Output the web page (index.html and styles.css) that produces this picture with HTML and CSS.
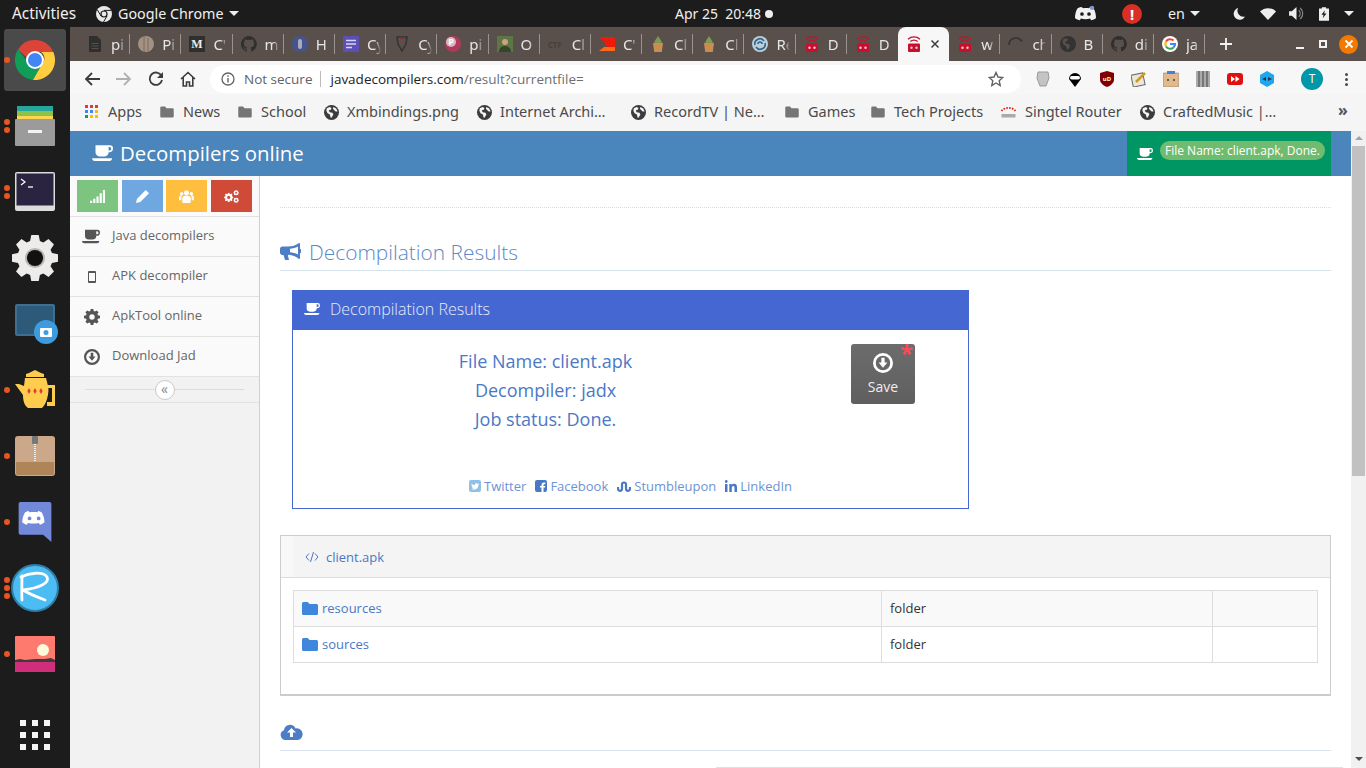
FILE: index.html
```html
<!DOCTYPE html>
<html lang="en">
<head>
<meta charset="utf-8">
<title>Decompilers online</title>
<link rel="stylesheet" href="styles.css">
</head>
<body>
<svg class="defs" width="0" height="0" aria-hidden="true">
  <symbol id="coffee" viewBox="0 0 24 20"><path fill-rule="evenodd" d="M4 1h16.500a3.500 3.500 0 0 1 3.500 3.500a4.500 4.500 0 0 1-4.500 4.500H19a5 5 0 0 1-5 5H9a5 5 0 0 1-5-5zM19 3v4h1a2 2 0 0 0 0-4z"/><path d="M0 16h23c0 1.800-1.500 3-3 3H3c-1.500 0-3-1.200-3-3z"/></symbol>
  <symbol id="globe" viewBox="0 0 16 16"><circle cx="8" cy="8" r="8" fill="#3c3c3c"/><path fill="#f5f5f5" d="M3 3.500l3-1.300 2 1-1 2-2 .5 1 2 3 .5 1 2-2 3.300-1-.3-.7-3-2.500-1.500L2.500 6zM10 2l3 1.800 1.500 3-2 .2-1.500-1.500L9.500 4z"/></symbol>
  <symbol id="folder" viewBox="0 0 16 14"><path d="M0 2a1.500 1.500 0 0 1 1.500-1.500h4.200L7.500 2.500h7A1.500 1.500 0 0 1 16 4v8a1.500 1.500 0 0 1-1.500 1.500h-13A1.500 1.500 0 0 1 0 12z"/></symbol>
  <symbol id="github" viewBox="0 0 16 16"><path fill-rule="evenodd" d="M8 0a8 8 0 0 0-2.500 15.600c.4.100.5-.2.500-.4v-1.400c-2.200.5-2.700-1-2.700-1-.4-.9-.9-1.200-.9-1.200-.7-.5.100-.5.100-.5.800.1 1.200.8 1.200.8.700 1.200 1.900.9 2.300.7.100-.5.300-.9.500-1.100-1.800-.2-3.600-.9-3.600-4 0-.9.300-1.600.8-2.100-.1-.2-.4-1 .1-2.100 0 0 .7-.2 2.200.8a7.600 7.600 0 0 1 4 0c1.500-1 2.200-.8 2.200-.8.400 1.100.2 1.900.1 2.100.5.600.8 1.300.8 2.100 0 3.100-1.900 3.700-3.700 3.900.3.300.6.800.6 1.500v2.200c0 .2.100.5.600.4A8 8 0 0 0 8 0z"/></symbol>
  <symbol id="redbot" viewBox="0 0 16 16"><path fill="none" stroke="#c8102e" stroke-width="1.400" d="M2 3.200a9 9 0 0 1 12 0M4.300 5.600a5.500 5.500 0 0 1 7.400 0"/><rect x="2" y="7.500" width="12" height="8.500" rx="1" fill="#c8102e"/><circle cx="5.500" cy="11.700" r="1.200" fill="#f4c9c9"/><circle cx="10.500" cy="11.700" r="1.200" fill="#f4c9c9"/></symbol>
  <symbol id="pot" viewBox="0 0 16 16"><path fill="#7c9a55" d="M8 0l3.500 5.500V7h-7V5.500z"/><path fill="#c98e4f" d="M3 7h10l-1.200 9H4.200z"/></symbol>
  <symbol id="gear" viewBox="0 0 16 16"><path fill-rule="evenodd" d="M6.700 0h2.600l.4 2.100 1.200.5 1.800-1.200 1.900 1.900-1.200 1.800.5 1.200 2.100.4v2.600l-2.100.4-.5 1.200 1.200 1.800-1.900 1.900-1.800-1.200-1.200.5-.4 2.100H6.700l-.4-2.100-1.200-.5-1.800 1.200-1.900-1.900 1.200-1.800-.5-1.200L0 9.300V6.700l2.100-.4.500-1.200-1.200-1.800 1.900-1.900 1.800 1.200 1.200-.5zM8 5.300a2.700 2.700 0 1 0 0 5.400 2.700 2.700 0 0 0 0-5.400z"/></symbol>
  <symbol id="download" viewBox="0 0 16 16"><path fill-rule="evenodd" d="M8 0a8 8 0 1 1 0 16A8 8 0 0 1 8 0zm0 2.200a5.800 5.800 0 1 0 0 11.600A5.800 5.800 0 0 0 8 2.200z"/><path d="M6.700 3.800h2.600v3.700h2.200L8 11.800 4.500 7.500h2.200z"/></symbol>
  <symbol id="tab-doc" viewBox="0 0 16 16"><path fill="#2f2f2f" d="M2 0h8l4 4v12H2z"/><path stroke="#5a504b" d="M4.500 7.500h7M4.500 10h7M4.500 12.500h7"/></symbol>
</svg>

<header class="topbar">
  <span class="activities">Activities</span>
  <span class="appmenu">
    <svg class="ic-16" viewBox="0 0 16 16"><circle cx="8" cy="8" r="8" fill="#e9e9e9"/><circle cx="8" cy="8" r="3.600" fill="#1c1c1c"/><circle cx="8" cy="8" r="2.400" fill="#e9e9e9"/><path d="M8 4.400h7M5 10L1.500 4M11 10l-3.500 6" stroke="#1c1c1c" stroke-width="1"/></svg>
    <span>Google Chrome</span><i class="caret"></i>
  </span>
  <span class="clock">Apr 25&nbsp; 20:48<i class="clock-dot"></i></span>
  <span class="tray">
    <svg class="tray-discord" viewBox="0 0 24 18"><path fill="#f2f2f2" fill-rule="evenodd" d="M7 1.500C5 2 3.500 2.700 3 3 1 6 0 10 0 14c1.500 1.500 4 2.500 5.500 2.700l1.300-2c3 1 7.400 1 10.400 0l1.300 2c1.500-.2 4-1.200 5.500-2.700 0-4-1-8-3-11-.5-.3-2-1-4-1.500l-.8 1.500c-2-.3-4.400-.3-6.400 0zM8 7.500a2 2 0 1 1 0 4.200 2 2 0 0 1 0-4.200zm8 0a2 2 0 1 1 0 4.200 2 2 0 0 1 0-4.200z"/><circle cx="19.500" cy="2.500" r="2.500" fill="#7b9bd8"/></svg>
    <span class="alert">!</span>
    <span class="lang">en</span><i class="caret"></i>
    <svg class="tray-moon" viewBox="0 0 14 14"><path fill="#eee" d="M6 0a7 7 0 1 0 8 10A7 7 0 0 1 6 0z"/></svg>
    <svg class="tray-wifi" viewBox="0 0 16 12"><path fill="#eee" d="M8 12L0 3.500C4.500-1 11.500-1 16 3.500z"/></svg>
    <svg class="tray-vol" viewBox="0 0 16 14"><path fill="#eee" d="M0 4.500h3L8 0v14L3 9.500H0z"/><path fill="none" stroke="#888" stroke-width="1.300" d="M10.500 3.500a5 5 0 0 1 0 7M12 1a8 8 0 0 1 0 12"/></svg>
    <svg class="tray-batt" viewBox="0 0 12 16"><path fill="#eee" d="M3.500 0h5v1.500H12V16H0V1.500h3.500z"/><path fill="#1c1c1c" d="M7 3.500L3 9h2.500L4.500 13 9 7.500H6.300z"/></svg>
    <i class="caret caret-end"></i>
  </span>
</header>

<div class="desk">
  <nav class="dock">
    <div class="dock-slot dock-active"><i class="run run-1"></i>
      <svg class="dock-ic-40" viewBox="0 0 40 40"><path fill="#db4437" d="M3 9.500A20 20 0 0 1 38.300 12H20a8 8 0 0 0-7.800 6z"/><path fill="#0f9d58" d="M3 9.500A20 20 0 0 0 18 40l7.500-13a8 8 0 0 1-12.600-5z"/><path fill="#ffcd40" d="M38.300 12A20 20 0 0 1 18 40l8.800-15.500A8 8 0 0 0 26 12z"/><circle cx="20" cy="20" r="9" fill="#fff"/><circle cx="20" cy="20" r="7" fill="#4285f4"/></svg>
    </div>
    <div class="dock-slot"><i class="run run-2"></i>
      <svg class="dock-ic-40" viewBox="0 0 40 40"><rect x="2" y="0" width="36" height="6" fill="#26a69a"/><rect x="2" y="5" width="36" height="6" fill="#8bc34a"/><rect x="2" y="10" width="36" height="6" fill="#ffd54f"/><rect y="13" width="40" height="27" rx="1" fill="#9b9b9b"/><rect x="13" y="24" width="14" height="3" fill="#f2f2f2"/></svg>
    </div>
    <div class="dock-slot"><i class="run run-2"></i>
      <svg class="dock-ic-40" viewBox="0 0 40 40"><rect width="40" height="39" rx="2" fill="#dcdcdc"/><rect x="1.500" y="1.500" width="37" height="32" fill="#2b2440"/><path d="M6 7l4 3-4 3" fill="none" stroke="#fff" stroke-width="1.200"/><path d="M13 15h5" stroke="#fff" stroke-width="1.300"/></svg>
    </div>
    <div class="dock-slot">
      <svg class="dock-ic-46" viewBox="0 0 16 16"><use href="#gear" fill="#eeeceb"/><circle cx="8" cy="8" r="3.500" fill="#b9b7b5"/><circle cx="8" cy="8" r="2.800" fill="#111"/></svg>
    </div>
    <div class="dock-slot">
      <svg class="dock-ic-46" viewBox="0 0 46 40"><rect x="3" y="0" width="40" height="32" rx="2" fill="#2d5a78"/><rect x="4" y="1" width="38" height="30" rx="2" fill="none" stroke="#3c6f91" stroke-width="2"/><circle cx="34" cy="28" r="12" fill="#3d9ce0"/><rect x="28" y="24" width="12" height="9" rx="1" fill="#fff"/><circle cx="34" cy="28.500" r="2.500" fill="#3d9ce0"/></svg>
    </div>
    <div class="dock-slot"><i class="run run-1"></i>
      <svg class="dock-ic-40" viewBox="0 0 40 40"><path fill="#ffcd4d" d="M20 0l6 3 3 1v3H11V4l3-1z"/><path fill="#ffcd4d" d="M10 8h21l2 8c.8 3 .6 8-1 13-1 4-3 7-5 9H13C9 35 8 30 8 25L0 14h4l5 2z"/><path fill="#ffcd4d" fill-rule="evenodd" d="M32 15h8v21h-8v-4h5V18h-5z"/><path fill="#e53935" d="M14 18l1.700 3-1.700 3-1.700-3zM20 18l1.700 3-1.700 3-1.700-3zM26 18l1.700 3-1.700 3-1.700-3z"/></svg>
    </div>
    <div class="dock-slot"><i class="run run-1"></i>
      <svg class="dock-ic-40" viewBox="0 0 40 40"><rect width="40" height="40" rx="3" fill="#cba88a"/><path fill="#b08459" d="M1 26h38v11a2 2 0 0 1-2 2H3a2 2 0 0 1-2-2z"/><rect x="17" y="0" width="6" height="8" rx="1" fill="#77777a"/><path d="M20 8v18" stroke="#eee" stroke-width="2" stroke-dasharray="1 1"/></svg>
    </div>
    <div class="dock-slot"><i class="run run-1"></i>
      <svg class="dock-ic-40" viewBox="0 0 40 44"><path fill="#7289da" d="M2 2a2 2 0 0 1 2-2h32a2 2 0 0 1 2 2v42l-9-8H4a2 2 0 0 1-2-2z"/><path fill="#fff" fill-rule="evenodd" d="M13 10c-2 .5-3 1-4 1.500-2 3-3 7-3 11 2 1.500 4 2 5 2.500l1.200-2c4 1 8 1 12 0l1.200 2c1-.5 3-1 5-2.500 0-4-1-8-3-11-1-.5-2-1-4-1.500l-.6 1.200c-3-.4-6-.4-9 0zM14 16a2 2 0 1 1 0 4.200 2 2 0 0 1 0-4.200zm10 0a2 2 0 1 1 0 4.200 2 2 0 0 1 0-4.200z"/></svg>
    </div>
    <div class="dock-slot"><i class="run run-3"></i>
      <svg class="dock-ic-48" viewBox="0 0 48 48"><circle cx="24" cy="24" r="23" fill="#4cbcf5" stroke="#2e7ea6" stroke-width="2"/><path fill="none" stroke="#fff" stroke-width="2.800" stroke-linecap="round" stroke-linejoin="round" d="M10 13c8-4 22-6 26 0 3 6-8 11-24 13 6 4 14 7 22 10M11 12c0 8-.5 16 0 24"/></svg>
    </div>
    <div class="dock-slot"><i class="run run-1"></i>
      <svg class="dock-ic-40 dock-photo" viewBox="0 0 40 36"><rect width="40" height="36" rx="1" fill="#ff7a6e"/><circle cx="28" cy="14" r="6" fill="#fff9dc"/><path fill="#3c3c3c" d="M0 24l5-1 5 1 10-1 10 0 6-1 4 2v3H0z"/><rect y="26" width="40" height="10" fill="#d02e7b"/></svg>
    </div>
    <div class="dock-grid">
      <i></i><i></i><i></i><i></i><i></i><i></i><i></i><i></i><i></i>
    </div>
  </nav>

  <div class="browser">
    <div class="tabstrip">
      <div class="tab"><svg class="fav" viewBox="0 0 16 16"><use href="#tab-doc"/></svg><span class="tab-label">pi</span></div>
      <div class="tab"><svg class="fav" viewBox="0 0 16 16"><circle cx="8" cy="8" r="8" fill="#a39183"/><path d="M6 0v16M10 2v13" stroke="#7d6a5c"/></svg><span class="tab-label">Pi</span></div>
      <div class="tab"><svg class="fav" viewBox="0 0 16 16"><rect width="16" height="16" fill="#2f2f2f"/><text x="8" y="12" class="fav-m">M</text></svg><span class="tab-label">C'</span></div>
      <div class="tab"><svg class="fav fav-dark" viewBox="0 0 16 16"><use href="#github"/></svg><span class="tab-label">m</span></div>
      <div class="tab"><svg class="fav" viewBox="0 0 16 16"><circle cx="8" cy="8" r="8" fill="#43548f"/><rect x="6" y="3" width="4" height="10" rx="2" fill="#aab"/></svg><span class="tab-label">H</span></div>
      <div class="tab"><svg class="fav" viewBox="0 0 16 16"><rect width="16" height="16" rx="1" fill="#5c4fb5"/><path d="M3 4.500h10M3 8h10M3 11.500h6" stroke="#d8d4f2" stroke-width="1.500"/></svg><span class="tab-label">Cy</span></div>
      <div class="tab"><svg class="fav" viewBox="0 0 16 16"><path fill="none" stroke="#333" stroke-width="1.500" d="M3 1h10l-1 7-4 7-4-7z"/><path d="M6 1h4v2H6z" fill="#8a2b2b"/></svg><span class="tab-label">Cy</span></div>
      <div class="tab"><svg class="fav" viewBox="0 0 16 16"><circle cx="8" cy="8" r="8" fill="#b03a5b"/><circle cx="6" cy="6" r="5" fill="#d8b7c4"/><text x="6" y="9" class="fav-p">P</text></svg><span class="tab-label">pi</span></div>
      <div class="tab"><svg class="fav" viewBox="0 0 16 16"><rect width="16" height="16" fill="#5e7645"/><circle cx="8" cy="6" r="3" fill="#caa27f"/><path d="M2 16c0-4 3-6 6-6s6 2 6 6z" fill="#33452b"/></svg><span class="tab-label">O</span></div>
      <div class="tab"><span class="fav fav-ctf">CTF</span><span class="tab-label">Cl</span></div>
      <div class="tab"><svg class="fav" viewBox="0 0 16 16"><path fill="#f01a0a" d="M0 1h16v10H8l-3-5z"/><path fill="#ff6a1a" d="M5 11h11v4H0z"/></svg><span class="tab-label">C'</span></div>
      <div class="tab"><svg class="fav" viewBox="0 0 16 16"><use href="#pot"/></svg><span class="tab-label">Cl</span></div>
      <div class="tab"><svg class="fav" viewBox="0 0 16 16"><use href="#pot"/></svg><span class="tab-label">Cl</span></div>
      <div class="tab"><svg class="fav" viewBox="0 0 16 16"><circle cx="8" cy="8" r="8" fill="#b9cfdc"/><path fill="none" stroke="#37668a" stroke-width="1.600" d="M3 9a5 5 0 0 1 9-4M13 7a5 5 0 0 1-9 4M6 8a2 2 0 0 1 4 0"/></svg><span class="tab-label">Re</span></div>
      <div class="tab"><svg class="fav" viewBox="0 0 16 16"><use href="#redbot"/></svg><span class="tab-label">D</span></div>
      <div class="tab tab-before-active"><svg class="fav" viewBox="0 0 16 16"><use href="#redbot"/></svg><span class="tab-label">D</span></div>
      <div class="tab tab-active"><svg class="fav" viewBox="0 0 16 16"><use href="#redbot"/></svg><svg class="tab-close" viewBox="0 0 10 10"><path d="M1.500 1.500l7 7M8.500 1.500l-7 7" stroke="#3c3c3c" stroke-width="1.500"/></svg></div>
      <div class="tab"><svg class="fav" viewBox="0 0 16 16"><use href="#redbot"/></svg><span class="tab-label">w</span></div>
      <div class="tab"><svg class="fav" viewBox="0 0 16 16"><path fill="none" stroke="#333" stroke-width="1.600" d="M1 9a7 7 0 0 1 13-3.500"/></svg><span class="tab-label">ch</span></div>
      <div class="tab"><svg class="fav" viewBox="0 0 16 16"><circle cx="8" cy="8" r="8" fill="#333"/><path fill="#5a504b" d="M3 3.500l3-1.300 2 1-1 2-2 .5 1 2 3 .5 1 2-2 3.300-1-.3-.7-3-2.500-1.500L2.500 6z"/></svg><span class="tab-label">B</span></div>
      <div class="tab"><svg class="fav fav-dark" viewBox="0 0 16 16"><use href="#github"/></svg><span class="tab-label">di</span></div>
      <div class="tab"><svg class="fav" viewBox="0 0 16 16"><circle cx="8" cy="8" r="8" fill="#fff"/><path fill="none" stroke-width="2.200" stroke="#ea4335" d="M11.500 4.500A5 5 0 0 0 4 5.500"/><path fill="none" stroke-width="2.200" stroke="#fbbc05" d="M4 5.500a5 5 0 0 0 0 5"/><path fill="none" stroke-width="2.200" stroke="#34a853" d="M4 10.500a5 5 0 0 0 7.500 1"/><path fill="none" stroke-width="2.200" stroke="#4285f4" d="M11.500 11.500A5 5 0 0 0 13 8H8"/></svg><span class="tab-label">ja</span></div>
      <svg class="newtab" viewBox="0 0 12 12"><path d="M6 0v12M0 6h12" stroke="#f2f2f2" stroke-width="1.800"/></svg>
      <div class="winbtns">
        <i class="win-min"></i><i class="win-max"></i>
        <span class="win-close"><svg viewBox="0 0 10 10"><path d="M1.500 1.500l7 7M8.500 1.500l-7 7" stroke="#fff" stroke-width="1.800"/></svg></span>
      </div>
    </div>

    <div class="toolbar">
      <svg class="tb-ic" viewBox="0 0 16 16"><path fill="none" stroke="#3c3c3c" stroke-width="1.800" d="M16 8H2M8 2L2 8l6 6"/></svg>
      <svg class="tb-ic" viewBox="0 0 16 16"><path fill="none" stroke="#b0b0b0" stroke-width="1.800" d="M0 8h14M8 2l6 6-6 6"/></svg>
      <svg class="tb-ic" viewBox="0 0 16 16"><path fill="none" stroke="#3c3c3c" stroke-width="1.800" d="M13.500 5A6.200 6.200 0 1 0 14 9"/><path fill="#3c3c3c" d="M15 1v6H9z"/></svg>
      <svg class="tb-ic" viewBox="0 0 16 16"><path fill="none" stroke="#3c3c3c" stroke-width="1.600" d="M1 8l7-6.500L15 8M3.200 6.500V15h3.300v-4h3v4h3.300V6.500"/></svg>
      <div class="omnibox">
        <svg class="omni-info" viewBox="0 0 14 14"><circle cx="7" cy="7" r="6" fill="none" stroke="#5f6368" stroke-width="1.300"/><path d="M7 6v4.500M7 3.300v1.500" stroke="#5f6368" stroke-width="1.400"/></svg>
        <span class="omni-warn">Not secure</span>
        <i class="omni-sep"></i>
        <span class="omni-url">javadecompilers.com<span class="omni-path">/result?currentfile=</span></span>
        <svg class="omni-star" viewBox="0 0 16 16"><path fill="none" stroke="#5f6368" stroke-width="1.400" d="M8 1.500l2 4.500 4.800.5-3.600 3.200 1 4.800L8 12l-4.200 2.500 1-4.800L1.200 6.500 6 6z"/></svg>
      </div>
      <div class="extensions">
        <svg class="ext" viewBox="0 0 16 16"><path fill="#c4c4c4" stroke="#999" d="M3 1h10l1 6-3 8H5L2 7z"/></svg>
        <svg class="ext" viewBox="0 0 16 16"><path d="M8 16L2 8a6 6 0 1 1 12 0z" fill="#000"/><rect x="3" y="5" width="10" height="3.500" rx="1.700" fill="#fff"/></svg>
        <svg class="ext" viewBox="0 0 16 16"><path fill="#800000" d="M1 2l7-2 7 2v7c0 3-4 6-7 7-3-1-7-4-7-7z"/><text x="8" y="10" class="ext-ub">uD</text></svg>
        <svg class="ext" viewBox="0 0 16 16"><rect x="1" y="3" width="12" height="12" fill="#eee6d6" stroke="#666" transform="rotate(-12 7 9)"/><path d="M5 11L14 2" stroke="#c99a2e" stroke-width="2.500"/></svg>
        <svg class="ext" viewBox="0 0 16 16"><rect y="2" width="16" height="14" rx="1" fill="#e2b98d" stroke="#7d6b56" stroke-width=".5"/><rect x="4" y="0" width="8" height="3" fill="#4a7fd6"/><circle cx="5" cy="9" r=".9" fill="#333"/><circle cx="11" cy="9" r=".9" fill="#333"/></svg>
        <svg class="ext" viewBox="0 0 16 16"><rect x="1" width="14" height="16" fill="#aaa"/><path d="M4 0v16M8 0v16M12 0v16" stroke="#777" stroke-width="2"/></svg>
        <svg class="ext" viewBox="0 0 16 16"><rect y="2" width="16" height="12" rx="3" fill="#e01010"/><path d="M4 5l4 3-4 3zM8.500 5l4 3-4 3z" fill="#fff"/></svg>
        <svg class="ext" viewBox="0 0 16 16"><path fill="#1ea7ee" d="M8 0l7 4v8l-7 4-7-4V4z"/><path fill="#334" d="M3 8l4-2v4zM13 8l-4-2v4z"/></svg>
      </div>
      <span class="avatar">T</span>
      <span class="kebab"><i></i><i></i><i></i></span>
    </div>

    <div class="bookmarks">
      <span class="bm bm-apps"><span class="apps-grid"><i class="a-r"></i><i class="a-r"></i><i class="a-r"></i><i class="a-b"></i><i class="a-b"></i><i class="a-y"></i><i class="a-g"></i><i class="a-y"></i><i class="a-y"></i></span>Apps</span>
      <span class="bm bm-news"><svg class="bm-folder" viewBox="0 0 16 14"><use href="#folder"/></svg>News</span>
      <span class="bm bm-school"><svg class="bm-folder" viewBox="0 0 16 14"><use href="#folder"/></svg>School</span>
      <span class="bm bm-xm"><svg class="bm-globe" viewBox="0 0 16 16"><use href="#globe"/></svg>Xmbindings.png</span>
      <span class="bm bm-ia"><svg class="bm-globe" viewBox="0 0 16 16"><use href="#globe"/></svg>Internet Archi…</span>
      <span class="bm bm-rec"><svg class="bm-globe" viewBox="0 0 16 16"><use href="#globe"/></svg>RecordTV | Ne…</span>
      <span class="bm bm-games"><svg class="bm-folder" viewBox="0 0 16 14"><use href="#folder"/></svg>Games</span>
      <span class="bm bm-tech"><svg class="bm-folder" viewBox="0 0 16 14"><use href="#folder"/></svg>Tech Projects</span>
      <span class="bm bm-sing"><svg class="bm-singtel" viewBox="0 0 16 16"><path fill="none" stroke="#e2231a" stroke-width="1.800" stroke-dasharray="1.600 1.200" d="M1 7a8 6 0 0 1 14 0"/><rect x="1" y="10" width="14" height="3.500" fill="#aaa"/></svg>Singtel Router</span>
      <span class="bm bm-craft"><svg class="bm-globe" viewBox="0 0 16 16"><use href="#globe"/></svg>CraftedMusic |…</span>
      <span class="bm-more">»</span>
    </div>

    <div class="viewport">
      <div class="page">
        <div class="site-header">
          <div class="brand"><svg class="brand-ic" viewBox="0 0 24 20"><use href="#coffee"/></svg>Decompilers online</div>
          <div class="notify"><svg class="notify-ic" viewBox="0 0 24 20"><use href="#coffee"/></svg><span class="pill">File Name: client.apk, Done.</span></div>
        </div>
        <div class="site-body">
          <aside class="sidebar">
            <div class="shortcuts">
              <span class="sc sc-green"><svg viewBox="0 0 14 12"><path fill="#fff" d="M0 10h2v2H0zM3 8h2v4H3zM6 6h2v6H6zM9 3h2v9H9zM12 0h2v12h-2z"/></svg></span>
              <span class="sc sc-blue"><svg viewBox="0 0 12 12"><path fill="#fff" d="M9 0l3 3-8 8-4 1 1-4z"/></svg></span>
              <span class="sc sc-yellow"><svg viewBox="0 0 16 14"><g fill="#fff"><circle cx="8" cy="3" r="2.700"/><path d="M3.500 14V9c0-2 2-3 4.500-3s4.500 1 4.500 3v5z"/><circle cx="2.800" cy="4" r="1.900"/><circle cx="13.200" cy="4" r="1.900"/><path d="M0 11V8c0-1.500 1-2.300 2.500-2.300.300 0 .500 0 .8.100C2.500 6.500 2.500 7.500 2.500 9v2zM16 11V8c0-1.500-1-2.300-2.500-2.300-.3 0-.5 0-.8.100.8.700.8 1.700.8 3.200v2z"/></g></svg></span>
              <span class="sc sc-red"><svg viewBox="0 0 16 14"><use href="#gear" x="0" y="3" width="10" height="10" fill="#fff"/><use href="#gear" x="10" y="0" width="6" height="6" fill="#fff"/><use href="#gear" x="10" y="8" width="6" height="6" fill="#fff"/></svg></span>
            </div>
            <ul class="menu">
              <li class="menu-item"><svg class="menu-ic" viewBox="0 0 24 20"><use href="#coffee"/></svg>Java decompilers</li>
              <li class="menu-item"><svg class="menu-ic menu-ic-phone" viewBox="0 0 8 12"><path fill-rule="evenodd" d="M1 0h6a1 1 0 0 1 1 1v10a1 1 0 0 1-1 1H1a1 1 0 0 1-1-1V1a1 1 0 0 1 1-1zm0 2v8h6V2z"/></svg>APK decompiler</li>
              <li class="menu-item"><svg class="menu-ic menu-ic-round" viewBox="0 0 16 16"><use href="#gear"/></svg>ApkTool online</li>
              <li class="menu-item"><svg class="menu-ic menu-ic-round" viewBox="0 0 16 16"><use href="#download"/></svg>Download Jad</li>
            </ul>
            <div class="collapse"><span class="collapse-btn">«</span></div>
          </aside>
          <main class="main">
            <div class="breadcrumb-rule"></div>
            <h1 class="page-title"><svg class="title-ic" viewBox="0 0 21 17"><path fill="#4c7dc5" d="M19 0a1 1 0 0 1 1 1v5a2 2 0 0 1 0 4v5a1 1 0 0 1-1 1c-3-3-7-4-10-4.300-1-.1-1.200.3-1 1.300l1 4H5l-1.500-5H2.500A2.500 2.500 0 0 1 0 9V6a2.500 2.500 0 0 1 2.500-2.500H8C12 3.500 16 2.500 19 0zm-1 3.500C15.500 5 12.500 5.500 10 5.800v3.400c2.500.3 5.500.8 8 2.300z"/></svg>Decompilation Results</h1>

            <section class="result-panel">
              <div class="result-head"><svg class="result-head-ic" viewBox="0 0 24 20"><use href="#coffee"/></svg>Decompilation Results</div>
              <div class="result-body">
                <div class="result-info">
                  <p>File Name: client.apk</p>
                  <p>Decompiler: jadx</p>
                  <p>Job status: Done.</p>
                </div>
                <div class="save-wrap">
                  <a class="save-btn"><svg class="save-ic" viewBox="0 0 16 16"><use href="#download"/></svg>Save<span class="save-badge">*</span></a>
                </div>
              </div>
              <div class="social">
                <a><svg viewBox="0 0 12 12"><path fill="#8ec0e8" fill-rule="evenodd" d="M2 0h8a2 2 0 0 1 2 2v8a2 2 0 0 1-2 2H2a2 2 0 0 1-2-2V2a2 2 0 0 1 2-2zm7.500 3.500c-.5.200-1 .300-1.200.300-1-1-2.800-.2-2.500 1.300C4.500 5 3.500 4.500 2.700 3.500c-.4.800-.2 1.700.5 2.200-.3 0-.5-.1-.7-.2 0 .8.500 1.500 1.300 1.700h-.7c.2.600.8 1 1.400 1.100-.6.500-1.400.7-2.200.6 3.500 2 7.200-.5 7-4 .3-.2.500-.4.700-.7z"/></svg>Twitter</a>
                <a><svg viewBox="0 0 12 12"><path fill="#4a78c5" d="M2 0h8a2 2 0 0 1 2 2v8a2 2 0 0 1-2 2H8.500V7.500H10L10.300 6H8.500V5c0-.5.200-.8.800-.8h1V2.600H8.800C7.300 2.600 6.500 3.500 6.500 5v1H5v1.500h1.500V12H2a2 2 0 0 1-2-2V2a2 2 0 0 1 2-2z"/></svg>Facebook</a>
                <a><svg class="social-wide" viewBox="0 0 14 11"><path fill="none" stroke="#4a78c5" stroke-width="2.200" d="M1 6v1.800a2 2 0 0 0 4 0V3.500a2 2 0 0 1 4 0v4.300a2 2 0 0 0 4 0V6"/></svg>Stumbleupon</a>
                <a><svg viewBox="0 0 12 12"><path fill="#4a78c5" d="M0 4h2.500v8H0zM1.200 0a1.400 1.400 0 1 1 0 2.900 1.400 1.400 0 0 1 0-2.900zM4.300 4h2.400v1.100c.5-.8 1.300-1.300 2.500-1.300 2 0 2.800 1.300 2.800 3.500V12H9.500V7.800c0-1-.3-1.800-1.200-1.800-1 0-1.500.7-1.500 1.800V12H4.300z"/></svg>LinkedIn</a>
              </div>
            </section>

            <section class="widget">
              <div class="widget-head"><svg class="code-ic" viewBox="0 0 14 10"><path fill="none" stroke="#4a78c5" d="M4 1.500L1 5l3 3.500M10 1.500L13 5l-3 3.500M8.500 0l-3 10"/></svg><a>client.apk</a></div>
              <div class="widget-body">
                <table class="files">
                  <tr class="files-odd">
                    <td class="cell-name"><svg class="file-ic" viewBox="0 0 16 14"><use href="#folder"/></svg><a>resources</a></td>
                    <td class="cell-type">folder</td>
                    <td class="cell-extra"></td>
                  </tr>
                  <tr>
                    <td class="cell-name"><svg class="file-ic" viewBox="0 0 16 14"><use href="#folder"/></svg><a>sources</a></td>
                    <td class="cell-type">folder</td>
                    <td class="cell-extra"></td>
                  </tr>
                </table>
              </div>
            </section>

            <div class="upload-title"><svg class="cloud-ic" viewBox="0 0 22 16"><path fill="#4c7dc5" d="M5 16a5 5 0 0 1-1.500-9.700A6 6 0 0 1 15 4.500 5.800 5.800 0 0 1 17.500 16z"/><path fill="#fff" d="M11 4l4.500 4.500h-3V13h-3V8.500h-3z"/></svg></div>
            <div class="next-rule"></div>
          </main>
        </div>
      </div>
      <div class="scrollbar"><i class="sb-up"></i><i class="sb-thumb"></i><i class="sb-down"></i></div>
    </div>
  </div>
</div>
</body>
</html>
```
FILE: styles.css
```css
* { box-sizing: border-box; }
html, body { margin: 0; padding: 0; height: 100%; overflow: hidden; }
body { width: 1366px; height: 768px; display: flex; flex-direction: column; background: #fff; font-family: "Open Sans", "Noto Sans", sans-serif; color: #333; }
.defs { position: absolute; }
svg { display: block; flex: none; }
i { display: block; }

/* top bar */
.topbar { height: 27px; flex: none; background: #1c1c1c; color: #f0f0f0; display: flex; align-items: center; font-family: "Noto Sans", sans-serif; font-size: 14.300px; padding-left: 12px; }
.activities { width: 84px; font-size: 15.400px; }
.appmenu { display: flex; align-items: center; gap: 6px; width: 579px; }
.appmenu .caret { margin-left: -1px; }
.ic-16 { width: 16px; height: 16px; }
.caret { width: 0; height: 0; border-left: 5px solid transparent; border-right: 5px solid transparent; border-top: 5px solid #eee; margin-left: 5px; }
.clock { display: flex; align-items: center; width: 400px; font-size: 14px; }
.clock-dot { width: 8px; height: 8px; border-radius: 50%; background: #eee; margin-left: 4px; }
.tray { display: flex; align-items: center; }
.tray-discord { width: 21px; height: 17px; }
.alert { width: 20px; height: 20px; margin-left: 26px; border-radius: 50%; background: #d93025; color: #fff; font-weight: 700; font-size: 15px; line-height: 20px; text-align: center; }
.lang { margin-left: 26px; }
.tray-moon { width: 12px; height: 14px; margin-left: 33px; }
.tray-wifi { width: 16px; height: 12px; margin-left: 15px; }
.tray-vol { width: 15px; height: 13px; margin-left: 13px; }
.tray-batt { width: 10px; height: 14px; margin-left: 15px; }
.caret-end { margin-left: 15px; }

/* desk + dock */
.desk { flex: 1; display: flex; min-height: 0; }
.dock { width: 70px; flex: none; background: #1c1c1c; display: flex; flex-direction: column; align-items: center; padding-top: 2px; }
.dock-slot { width: 62px; height: 62px; flex: none; margin-bottom: 4px; display: flex; align-items: center; justify-content: center; position: relative; }
.dock-active { background: #4a4a4a; border-radius: 3px; }
.dock-ic-40 { width: 40px; height: 40px; }
.dock-ic-46 { width: 46px; height: 46px; }
.dock-ic-48 { width: 48px; height: 48px; }
.dock-photo { height: 36px; }
.run { position: absolute; left: 0; top: 50%; width: 6px; height: 6px; margin-top: -3px; border-radius: 50%; background: #e95420; }
.run-2 { margin-top: -7px; box-shadow: 0 8px 0 #e95420; }
.run-3 { margin-top: -11px; box-shadow: 0 8px 0 #e95420, 0 16px 0 #e95420; }
.dock-grid { width: 30px; margin-top: 31px; display: grid; grid-template-columns: repeat(3, 6px); gap: 6px; }
.dock-grid i { width: 6px; height: 6px; background: #f5f5f5; }

/* browser */
.browser { flex: 1; display: flex; flex-direction: column; min-width: 0; }
.tabstrip { height: 34px; flex: none; background: #5a504b; padding-left: 9px; display: flex; align-items: center; }
.tab { width: 51.2px; height: 34px; flex: none; display: flex; align-items: center; padding-left: 8px; position: relative; color: #e6e6e6; font-size: 15px; font-family: "Noto Sans", sans-serif; }
.tab::after { content: ""; position: absolute; right: 0; top: 7px; width: 1px; height: 20px; background: #9a9390; }
.tab-before-active::after, .tab-active::after { display: none; }
.tab-active { background: #f7f7f7; border-radius: 8px 8px 0 0; }
.fav { width: 16px; height: 16px; }
.fav-dark { fill: #2f2f2f; }
.fav-m { font: 700 12px "Liberation Serif", serif; fill: #eee; text-anchor: middle; }
.fav-p { font: 700 9px "Open Sans", sans-serif; fill: #fff; text-anchor: middle; }
.fav-ctf { font-size: 8px; font-weight: 700; color: #44403c; display: flex; align-items: center; }
.tab-label { width: 14px; margin-left: 8px; overflow: hidden; white-space: nowrap; -webkit-mask-image: linear-gradient(90deg, #000 60%, transparent); mask-image: linear-gradient(90deg, #000 60%, transparent); }
.tab-close { width: 10px; height: 10px; margin-left: 8px; }
.newtab { width: 12px; height: 12px; margin-left: 15px; }
.winbtns { display: flex; align-items: center; margin-left: 64px; }
.win-min { width: 8px; height: 2px; background: #f2f2f2; margin-top: 8px; }
.win-max { width: 8px; height: 8px; border: 2px solid #f2f2f2; margin-left: 15px; }
.win-close { width: 19px; height: 19px; margin-left: 12px; border-radius: 50%; background: #f57900; display: flex; align-items: center; justify-content: center; }
.win-close svg { width: 10px; height: 10px; }

.toolbar { height: 33px; flex: none; background: #f7f7f7; display: flex; align-items: center; padding: 3px 0 0 14px; }
.tb-ic { width: 16px; height: 16px; margin-right: 16px; }
.omnibox { width: 811px; height: 28px; margin-left: -2px; margin-right: 14px; border-radius: 14px; background: #fff; display: flex; align-items: center; padding-left: 11px; font-size: 13.500px; }
.omni-info { width: 14px; height: 14px; }
.omni-warn { margin-left: 9px; color: #5f6368; }
.omni-sep { width: 1px; height: 16px; background: #bbb; margin: 0 9px 0 8px; }
.omni-url { color: #222; flex: 1; }
.omni-path { color: #6b6f73; }
.omni-star { width: 16px; height: 16px; margin-right: 17px; }
.extensions { display: flex; gap: 16px; }
.ext { width: 16px; height: 16px; }
.ext-ub { font: 700 6px "Open Sans", sans-serif; fill: #fff; text-anchor: middle; }
.avatar { width: 22px; height: 22px; margin-left: 26px; border-radius: 50%; background: #0097a7; color: #fff; font-size: 12px; line-height: 22px; text-align: center; }
.kebab { display: flex; flex-direction: column; gap: 2px; margin-left: 22px; }
.kebab i { width: 3px; height: 3px; border-radius: 50%; background: #4a4a4a; }

.bookmarks { height: 37px; flex: none; background: #f5f5f5; display: flex; align-items: center; position: relative; padding-bottom: 1px; color: #4a4a4a; font-size: 14.500px; font-family: "Noto Sans", sans-serif; }
.bm { display: flex; align-items: center; white-space: nowrap; flex: none; line-height: 20px; }
.bm-apps { width: 75px; margin-left: 15px; }
.bm-news { width: 78px; }
.bm-school { width: 86px; }
.bm-xm { width: 153px; }
.bm-ia { width: 154px; }
.bm-rec { width: 154px; }
.bm-games { width: 86px; }
.bm-tech { width: 129px; }
.bm-sing { width: 140px; }
.bm-craft { width: 190px; }
.apps-grid { width: 13px; display: grid; grid-template-columns: repeat(3, 3px); gap: 2px; margin-right: 10px; }
.apps-grid i { height: 3px; }
.a-r { background: #e53935; } .a-b { background: #4285f4; } .a-y { background: #fbbc05; } .a-g { background: #0f9d58; }
.bm-folder { width: 14px; height: 12px; fill: #757575; margin-right: 9px; margin-top: 2px; }
.bm-globe { width: 15px; height: 15px; margin-right: 8px; margin-top: 2px; }
.bm-singtel { width: 17px; height: 16px; margin-right: 8px; margin-top: 2px; }
.bm, .bm-more { transform: translateY(-1px); }
.bm-more { position: absolute; left: 1268px; top: 6px; font-size: 16px; font-weight: 700; color: #555; }

/* viewport */
.viewport { flex: 1; display: flex; min-height: 0; overflow: hidden; }
.page { flex: 1; display: flex; flex-direction: column; min-width: 0; }
.scrollbar { width: 15px; flex: none; background: #f1f1f1; display: flex; flex-direction: column; align-items: center; }
.sb-up { width: 0; height: 0; margin-top: 5px; border-left: 4px solid transparent; border-right: 4px solid transparent; border-bottom: 4px solid #a3a3a3; }
.sb-thumb { width: 13px; height: 330px; margin-top: 6px; background: #c1c1c1; }
.sb-down { width: 0; height: 0; margin-top: auto; margin-bottom: 7px; border-left: 4px solid transparent; border-right: 4px solid transparent; border-top: 4px solid #505050; }

.site-header { height: 45px; flex: none; background: #4a85bb; display: flex; align-items: stretch; justify-content: space-between; padding-right: 20px; color: #fff; }
.brand { display: flex; align-items: center; padding: 0 0 2px 22px; font-size: 20.400px; }
.brand-ic { width: 21px; height: 18px; fill: #fff; margin-right: 7px; }
.notify { width: 204px; background: #009664; display: flex; align-items: center; padding-left: 10px; }
.notify-ic { width: 16px; height: 14px; fill: #fff; margin-right: 7px; }
.pill { width: 165px; height: 19px; margin-top: -7px; border-radius: 10px; background: #6fbb6f; font-size: 12px; line-height: 19px; text-align: center; white-space: nowrap; }

.site-body { flex: 1; display: flex; min-height: 0; }
.sidebar { width: 190px; flex: none; background: #f2f2f2; border-right: 1px solid #cfcfcf; }
.shortcuts { height: 41px; display: flex; padding: 4px 0 0 7px; gap: 4px; background: #fafafa; border-bottom: 1px solid #e2e2e2; }
.sc { width: 41px; height: 32px; display: flex; align-items: center; justify-content: center; }
.sc svg { width: 15px; height: 13px; }
.sc-green { background: #7cc47f; } .sc-blue { background: #6fa8e0; margin-right: -1px; } .sc-yellow { background: #ffbe3d; margin-right: 0; } .sc-red { background: #d04a38; }
.menu { list-style: none; margin: 0; padding: 0; background: #fafafa; }
.menu-item { height: 40px; display: flex; align-items: center; padding: 0 0 3px 12px; font-size: 13px; color: #666; border-bottom: 1px solid #e2e2e2; }
.menu-ic { width: 18px; height: 15px; fill: #555; margin: 3px 12px 0 0; }
.menu-ic-phone { width: 8px; height: 12px; margin: 3px 16px 0 6px; }
.menu-ic-round { width: 16px; height: 16px; margin: 3px 12px 0 2px; }
.collapse { height: 26px; position: relative; display: flex; align-items: center; justify-content: center; border-bottom: 1px solid #e2e2e2; }
.collapse::before { content: ""; position: absolute; left: 15px; right: 15px; top: 12px; height: 1px; background: #dcdcdc; }
.collapse-btn { width: 20px; height: 20px; position: relative; border: 1px solid #c8c8c8; border-radius: 50%; background: #fff; color: #888; font-size: 14px; line-height: 16px; text-align: center; }

.main { flex: 1; min-width: 0; padding: 0 20px; background: #fff; }
.breadcrumb-rule { height: 32px; border-bottom: 1px dotted #dcdcdc; }
.page-title { margin: 0; height: 63px; padding-top: 25px; display: flex; align-items: center; border-bottom: 1px solid #d5e3ed; font-size: 20.900px; font-weight: 300; color: #5b88c9; }
.title-ic { width: 21px; height: 17px; margin-right: 8px; }
.result-panel { width: 677px; height: 219px; margin: 19px 0 0 12px; border: 1px solid #4567d1; border-top: 0; }
.result-head { height: 40px; margin: 0 -1px; background: #4567d1; color: #e8ecfa; display: flex; align-items: center; padding: 0 0 2px 12px; font-size: 16px; font-weight: 300; }
.result-head-ic { width: 16px; height: 14px; fill: #fff; margin-right: 10px; }
.result-body { height: 137px; display: flex; color: #4c78c6; }
.result-info { width: 505px; padding-top: 17px; text-align: center; font-size: 18px; }
.result-info p { margin: 0; height: 29px; line-height: 29px; }
.save-wrap { padding: 14px 0 0 53px; }
.save-btn { width: 64px; height: 60px; position: relative; display: flex; flex-direction: column; align-items: center; padding-top: 9px; border-radius: 3px; background: linear-gradient(#6c6c6c, #5f5f5f); color: #eee; font-size: 14px; line-height: 18px; }
.save-ic { width: 20px; height: 20px; fill: #fff; margin-bottom: 5px; }
.save-badge { position: absolute; right: 2px; top: -3px; height: 14px; color: #ff4757; font-size: 24px; line-height: 24px; font-weight: 700; }
.social { display: flex; justify-content: center; gap: 9px; padding-top: 10px; color: #6e93d3; font-size: 13px; }
.social a { display: flex; align-items: center; gap: 3px; height: 18px; }
.social svg { width: 12px; height: 12px; }
.social .social-wide { width: 14px; height: 11px; }
.widget { height: 161px; margin-top: 26px; border: 1px solid #ccc; border-bottom-width: 2px; }
.widget-head { height: 42px; display: flex; align-items: center; padding-left: 24px; background: linear-gradient(90deg, #f8f8f8 12px, #f4f4f4 12px); border-bottom: 1px solid #ddd; color: #4a78c5; font-size: 13px; font-weight: 500; }
.code-ic { width: 14px; height: 10px; margin-right: 7px; }
.widget-body { padding: 12px 12px 0; }
.files { width: 1025px; border-collapse: collapse; font-size: 13px; }
.files td { height: 36px; border: 1px solid #ddd; padding: 0 8px 2px; }
.files-odd td { background: #f9f9f9; }
.cell-name { width: 588px; color: #4a78c5; }
.cell-name a { display: inline-block; vertical-align: middle; font-size: 13px; }
.cell-type { width: 331px; color: #333; }
.file-ic { display: inline-block; width: 16px; height: 15px; vertical-align: middle; fill: #3f86dd; margin-right: 4px; }
.upload-title { height: 55px; padding-top: 28px; border-bottom: 1px solid #dbe3f0; }
.cloud-ic { width: 23px; height: 16px; }
.next-rule { width: 627px; height: 0; margin: 16px 0 0 436px; border-top: 1px solid #e0e0e0; }
```
